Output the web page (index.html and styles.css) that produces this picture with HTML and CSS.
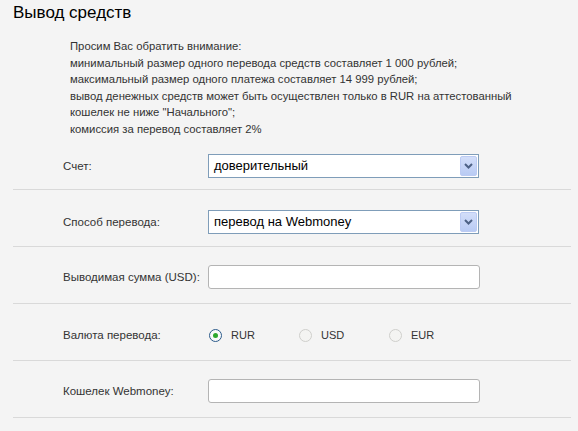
FILE: index.html
```html
<!DOCTYPE html>
<html lang="ru">
<head>
<meta charset="utf-8">
<title>Вывод средств</title>
<link rel="stylesheet" href="styles.css">
</head>
<body>
<div class="page">
  <h1 class="title">Вывод средств</h1>
  <div class="notice">
    Просим Вас обратить внимание:<br>
    минимальный размер одного перевода средств составляет 1 000 рублей;<br>
    максимальный размер одного платежа составляет 14 999 рублей;<br>
    вывод денежных средств может быть осуществлен только в RUR на аттестованный<br>
    кошелек не ниже "Начального";<br>
    комиссия за перевод составляет 2%
  </div>
  <div class="form">
    <div class="row row-first">
      <div class="line">
        <div class="label">Счет:</div>
        <div class="select">
          <span class="select-text">доверительный</span>
          <span class="select-btn"><svg width="9" height="6" viewBox="0 0 9 6"><path d="M1 1 L4.5 4.5 L8 1" fill="none" stroke="#4d6185" stroke-width="2"/></svg></span>
        </div>
      </div>
    </div>
    <div class="row">
      <div class="line">
        <div class="label">Способ перевода:</div>
        <div class="select">
          <span class="select-text">перевод на Webmoney</span>
          <span class="select-btn"><svg width="9" height="6" viewBox="0 0 9 6"><path d="M1 1 L4.5 4.5 L8 1" fill="none" stroke="#4d6185" stroke-width="2"/></svg></span>
        </div>
      </div>
    </div>
    <div class="row row-input">
      <div class="line">
        <div class="label">Выводимая сумма (USD):</div>
        <div class="input"></div>
      </div>
    </div>
    <div class="row row-radio">
      <div class="line line-radio">
        <div class="label">Валюта перевода:</div>
        <div class="radios">
          <div class="option"><span class="radio radio-on"><span class="dot"></span></span><span class="opt-text">RUR</span></div>
          <div class="option"><span class="radio"></span><span class="opt-text">USD</span></div>
          <div class="option"><span class="radio"></span><span class="opt-text">EUR</span></div>
        </div>
      </div>
    </div>
    <div class="row row-input">
      <div class="line">
        <div class="label">Кошелек Webmoney:</div>
        <div class="input"></div>
      </div>
    </div>
  </div>
</div>
</body>
</html>
```
FILE: styles.css
```css
html, body {
  margin: 0;
  padding: 0;
  background: #f4f4f4;
}
body {
  font-family: "Liberation Sans", Arial, sans-serif;
  color: #333;
}
.page {
  padding: 2px 7px 0 13px;
}
.title {
  margin: 0;
  font-size: 17px;
  line-height: 22px;
  font-weight: normal;
  color: #000;
}
.notice {
  margin: 14px 0 0 57px;
  font-size: 11.3px;
  line-height: 16.5px;
  color: #333;
}
.row {
  box-sizing: border-box;
  height: 57px;
  padding-top: 20px;
  border-bottom: 1px solid #d9d9d9;
}
.row-first {
  height: 53px;
  padding-top: 17px;
}
.row-input {
  padding-top: 18px;
}
.line {
  display: flex;
  align-items: center;
  height: 24px;
}
.line-radio {
  height: 22px;
}
.label {
  box-sizing: border-box;
  width: 195px;
  padding-left: 50px;
  font-size: 11.5px;
  color: #333;
}
.select {
  box-sizing: border-box;
  width: 271px;
  height: 24px;
  border: 1px solid #7f9db9;
  background: #fff;
  display: flex;
  padding: 1px;
}
.select-text {
  flex: 1;
  padding-left: 4px;
  font-size: 13px;
  line-height: 20px;
  color: #000;
}
.select-btn {
  width: 17px;
  box-sizing: border-box;
  border: 1px solid #bccbf3;
  border-radius: 2px;
  background: linear-gradient(#d3def9, #b9cbf4);
  display: flex;
  align-items: center;
  justify-content: center;
}
.input {
  box-sizing: border-box;
  width: 272px;
  height: 24px;
  border: 1px solid #b4b4b4;
  border-radius: 3px;
  background: #fff;
}
.radios {
  display: flex;
  margin-left: 1px;
}
.option {
  width: 90px;
  display: flex;
  align-items: center;
}
.radio {
  box-sizing: border-box;
  width: 13px;
  height: 13px;
  border-radius: 50%;
  border: 1px solid #cfcfcc;
  background: #f4f4f2;
  display: flex;
  align-items: center;
  justify-content: center;
}
.radio-on {
  border-color: #2b5a8a;
  background: #fafafa;
}
.dot {
  width: 5px;
  height: 5px;
  border-radius: 50%;
  background: #2ea82e;
}
.opt-text {
  margin-left: 9px;
  font-size: 11px;
  color: #333;
}
```
